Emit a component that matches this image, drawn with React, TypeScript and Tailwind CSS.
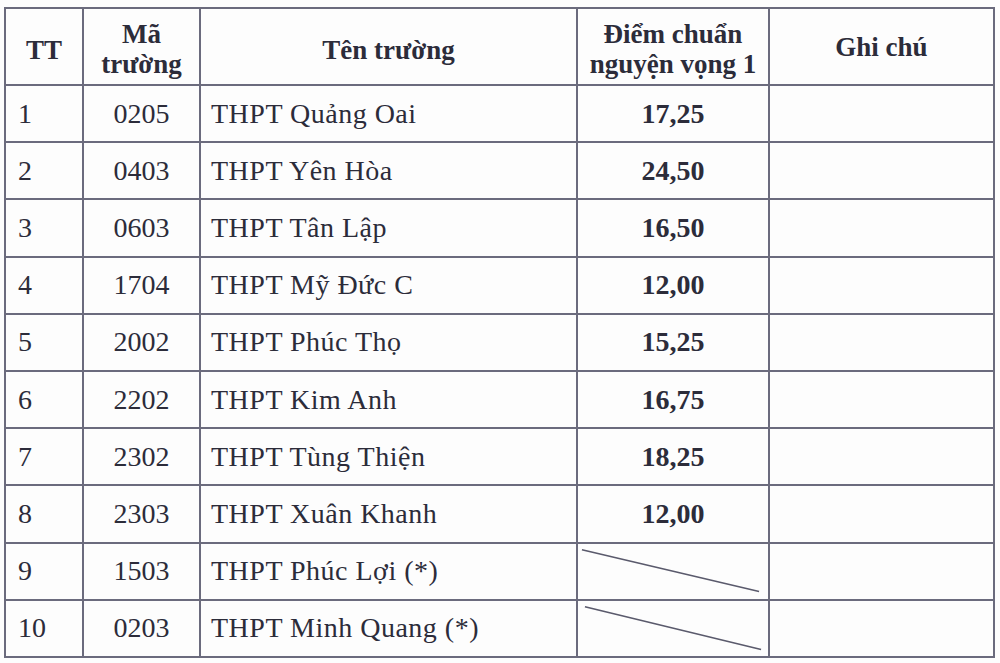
import React from "react";

type Row = {
  tt: string;
  ma: string;
  ten: string;
  diem?: string;
  slash?: [number, number, number, number];
};

const rows: Row[] = [
  { tt: "1", ma: "0205", ten: "THPT Quảng Oai", diem: "17,25" },
  { tt: "2", ma: "0403", ten: "THPT Yên Hòa", diem: "24,50" },
  { tt: "3", ma: "0603", ten: "THPT Tân Lập", diem: "16,50" },
  { tt: "4", ma: "1704", ten: "THPT Mỹ Đức C", diem: "12,00" },
  { tt: "5", ma: "2002", ten: "THPT Phúc Thọ", diem: "15,25" },
  { tt: "6", ma: "2202", ten: "THPT Kim Anh", diem: "16,75" },
  { tt: "7", ma: "2302", ten: "THPT Tùng Thiện", diem: "18,25" },
  { tt: "8", ma: "2303", ten: "THPT Xuân Khanh", diem: "12,00" },
  { tt: "9", ma: "1503", ten: "THPT Phúc Lợi (*)", slash: [4, 6, 183, 49] },
  { tt: "10", ma: "0203", ten: "THPT Minh Quang (*)", slash: [7, 6, 185, 50] },
];

const cell = "border-2 border-[#6b6b7d] p-0";

export default function App() {
  return (
    <div
      className="w-[1000px] h-[663px] bg-[#fdfdfd] pl-[4px] pt-[7px] text-[#2c2c3a]"
      style={{ fontFamily: '"Liberation Serif", "Times New Roman", serif' }}
    >
      <table className="table-fixed border-collapse w-[989px]">
        <colgroup>
          <col className="w-[78px]" />
          <col className="w-[117px]" />
          <col className="w-[377px]" />
          <col className="w-[192px]" />
          <col className="w-[225px]" />
        </colgroup>
        <thead>
          <tr className="h-[77px] text-[27px] font-bold leading-[30px]">
            <th className={`${cell} text-center pt-[6px]`}>TT</th>
            <th className={`${cell} text-center pt-[5px]`}>
              Mã
              <br />
              trường
            </th>
            <th className={`${cell} text-center pt-[6px]`}>Tên trường</th>
            <th className={`${cell} text-center pt-[4px]`}>
              Điểm chuẩn
              <br />
              nguyện vọng 1
            </th>
            <th className={`${cell} text-center`}>Ghi chú</th>
          </tr>
        </thead>
        <tbody className="text-[28px] leading-none">
          {rows.map((r) => (
            <tr key={r.tt} className="h-[57.2px]">
              <td className={`${cell} pl-[12px]`}>{r.tt}</td>
              <td className={`${cell} text-center`}>{r.ma}</td>
              <td className={`${cell} pl-[10px] whitespace-nowrap tracking-[0.5px]`}>{r.ten}</td>
              <td className={`${cell} relative text-center font-bold`}>
                {r.diem}
                {r.slash && (
                  <svg className="absolute inset-0 w-full h-full" viewBox="0 0 192 57" preserveAspectRatio="none">
                    <line
                      x1={r.slash[0]}
                      y1={r.slash[1]}
                      x2={r.slash[2]}
                      y2={r.slash[3]}
                      stroke="#5a5a6c"
                      strokeWidth="1.6"
                    />
                  </svg>
                )}
              </td>
              <td className={cell}></td>
            </tr>
          ))}
        </tbody>
      </table>
    </div>
  );
}
